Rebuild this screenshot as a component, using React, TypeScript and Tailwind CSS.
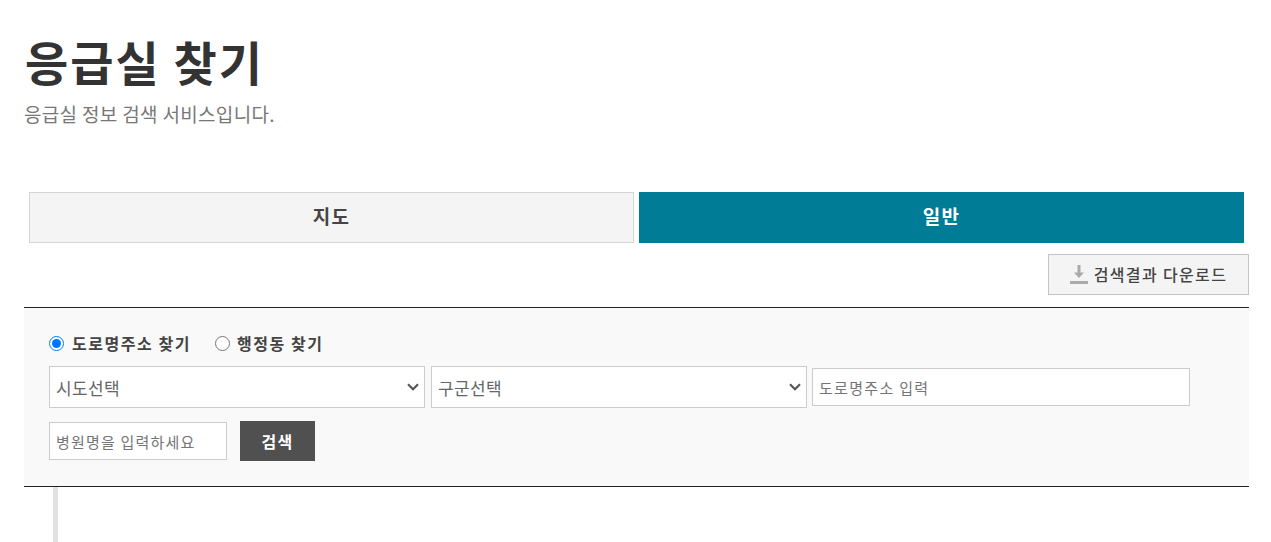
import React from "react";

const font = { fontFamily: '"Noto Sans CJK KR", "Liberation Sans", sans-serif' };

function Chevron() {
  return (
    <svg className="absolute right-[5px] top-[16px] pointer-events-none" width="14" height="10" viewBox="0 0 14 10" fill="none">
      <path d="M2 2.2L7 7.2 12 2.2" stroke="#555" strokeWidth="2.2" />
    </svg>
  );
}

function SelectBox({ label }: { label: string }) {
  return (
    <div className="relative w-[376px] h-[42px]">
      <select className="w-full h-full appearance-none border border-[#ccc] bg-white pl-[6px] pt-[2px] text-[17px] tracking-[0.4px] text-[#666] outline-none">
        <option>{label}</option>
      </select>
      <Chevron />
    </div>
  );
}

export default function App() {
  return (
    <div className="h-[542px] overflow-hidden bg-white pl-6 pr-[22px]" style={font}>
      {/* Title */}
      <div className="pt-[28px] h-[192px]">
        <h1 className="text-[47px] leading-[66px] font-bold text-[#333] tracking-[2px] pl-[1px]">응급실 찾기</h1>
        <p className="mt-[7px] text-[19px] leading-[26px] text-[#777] tracking-[0.33px]">응급실 정보 검색 서비스입니다.</p>
      </div>

      {/* Tabs */}
      <div className="flex gap-[5px] px-[5px]">
        <button className="w-[605px] h-[51px] pb-[3px] border border-[#d5d5d5] bg-[#f4f4f4] text-[19px] font-bold text-[#444] tracking-[1.2px]">지도</button>
        <button className="w-[605px] h-[51px] pb-[3px] bg-[#007c96] text-[19px] font-bold text-white tracking-[1.2px]">일반</button>
      </div>

      {/* Download */}
      <div className="flex justify-end mt-[11px]">
        <button className="flex items-center justify-center w-[201px] h-[41px] pb-[1px] border border-[#c4c4c4] bg-[#f4f4f4] text-[16px] font-medium text-[#444] tracking-[1.35px]">
          <svg className="mr-[6px] mt-[1px]" width="18" height="19" viewBox="0 0 18 19" fill="#aaa">
            <path d="M7.5 0h3v7.5H14L9 13 4 7.5h3.5z" />
            <rect x="0" y="16" width="18" height="3" />
          </svg>
          검색결과 다운로드
        </button>
      </div>

      {/* Search panel */}
      <div className="mt-3 h-[180px] border-y border-[#222] bg-[#f9f9f9] pl-[25px] pt-[24px]">
        <div className="flex items-center h-[22px] text-[16px] font-bold text-[#444] tracking-[1.55px]">
          <label className="flex items-center">
            <input type="radio" name="addr" defaultChecked className="w-[15px] h-[15px] mt-[1px] mr-2 accent-[#0075ff]" />
            도로명주소 찾기
          </label>
          <label className="flex items-center ml-[24px]">
            <input type="radio" name="addr" className="w-[15px] h-[15px] mt-[1px] mr-[7px]" />
            행정동 찾기
          </label>
        </div>
        <div className="flex items-center mt-[12px]">
          <SelectBox label="시도선택" />
          <div className="ml-[6px]">
            <SelectBox label="구군선택" />
          </div>
          <input
            placeholder="도로명주소 입력"
            className="ml-[5px] w-[378px] h-[38px] border border-[#ccc] bg-white px-[6px] text-[15px] tracking-[1.3px] text-[#555] placeholder:text-[#757575] outline-none"
          />
        </div>
        <div className="flex items-center mt-[13px]">
          <input
            placeholder="병원명을 입력하세요"
            className="w-[178px] h-[38px] border border-[#ccc] bg-white px-[6px] text-[15px] tracking-[1.2px] text-[#555] placeholder:text-[#757575] outline-none"
          />
          <button className="ml-[13px] w-[75px] h-[40px] pb-[1px] bg-[#505050] text-[16px] font-bold text-white tracking-[1.2px]">검색</button>
        </div>
      </div>

      {/* Result list edge */}
      <div className="ml-[29px] w-[5px] h-[60px] bg-[#e2e2e2]" />
    </div>
  );
}
